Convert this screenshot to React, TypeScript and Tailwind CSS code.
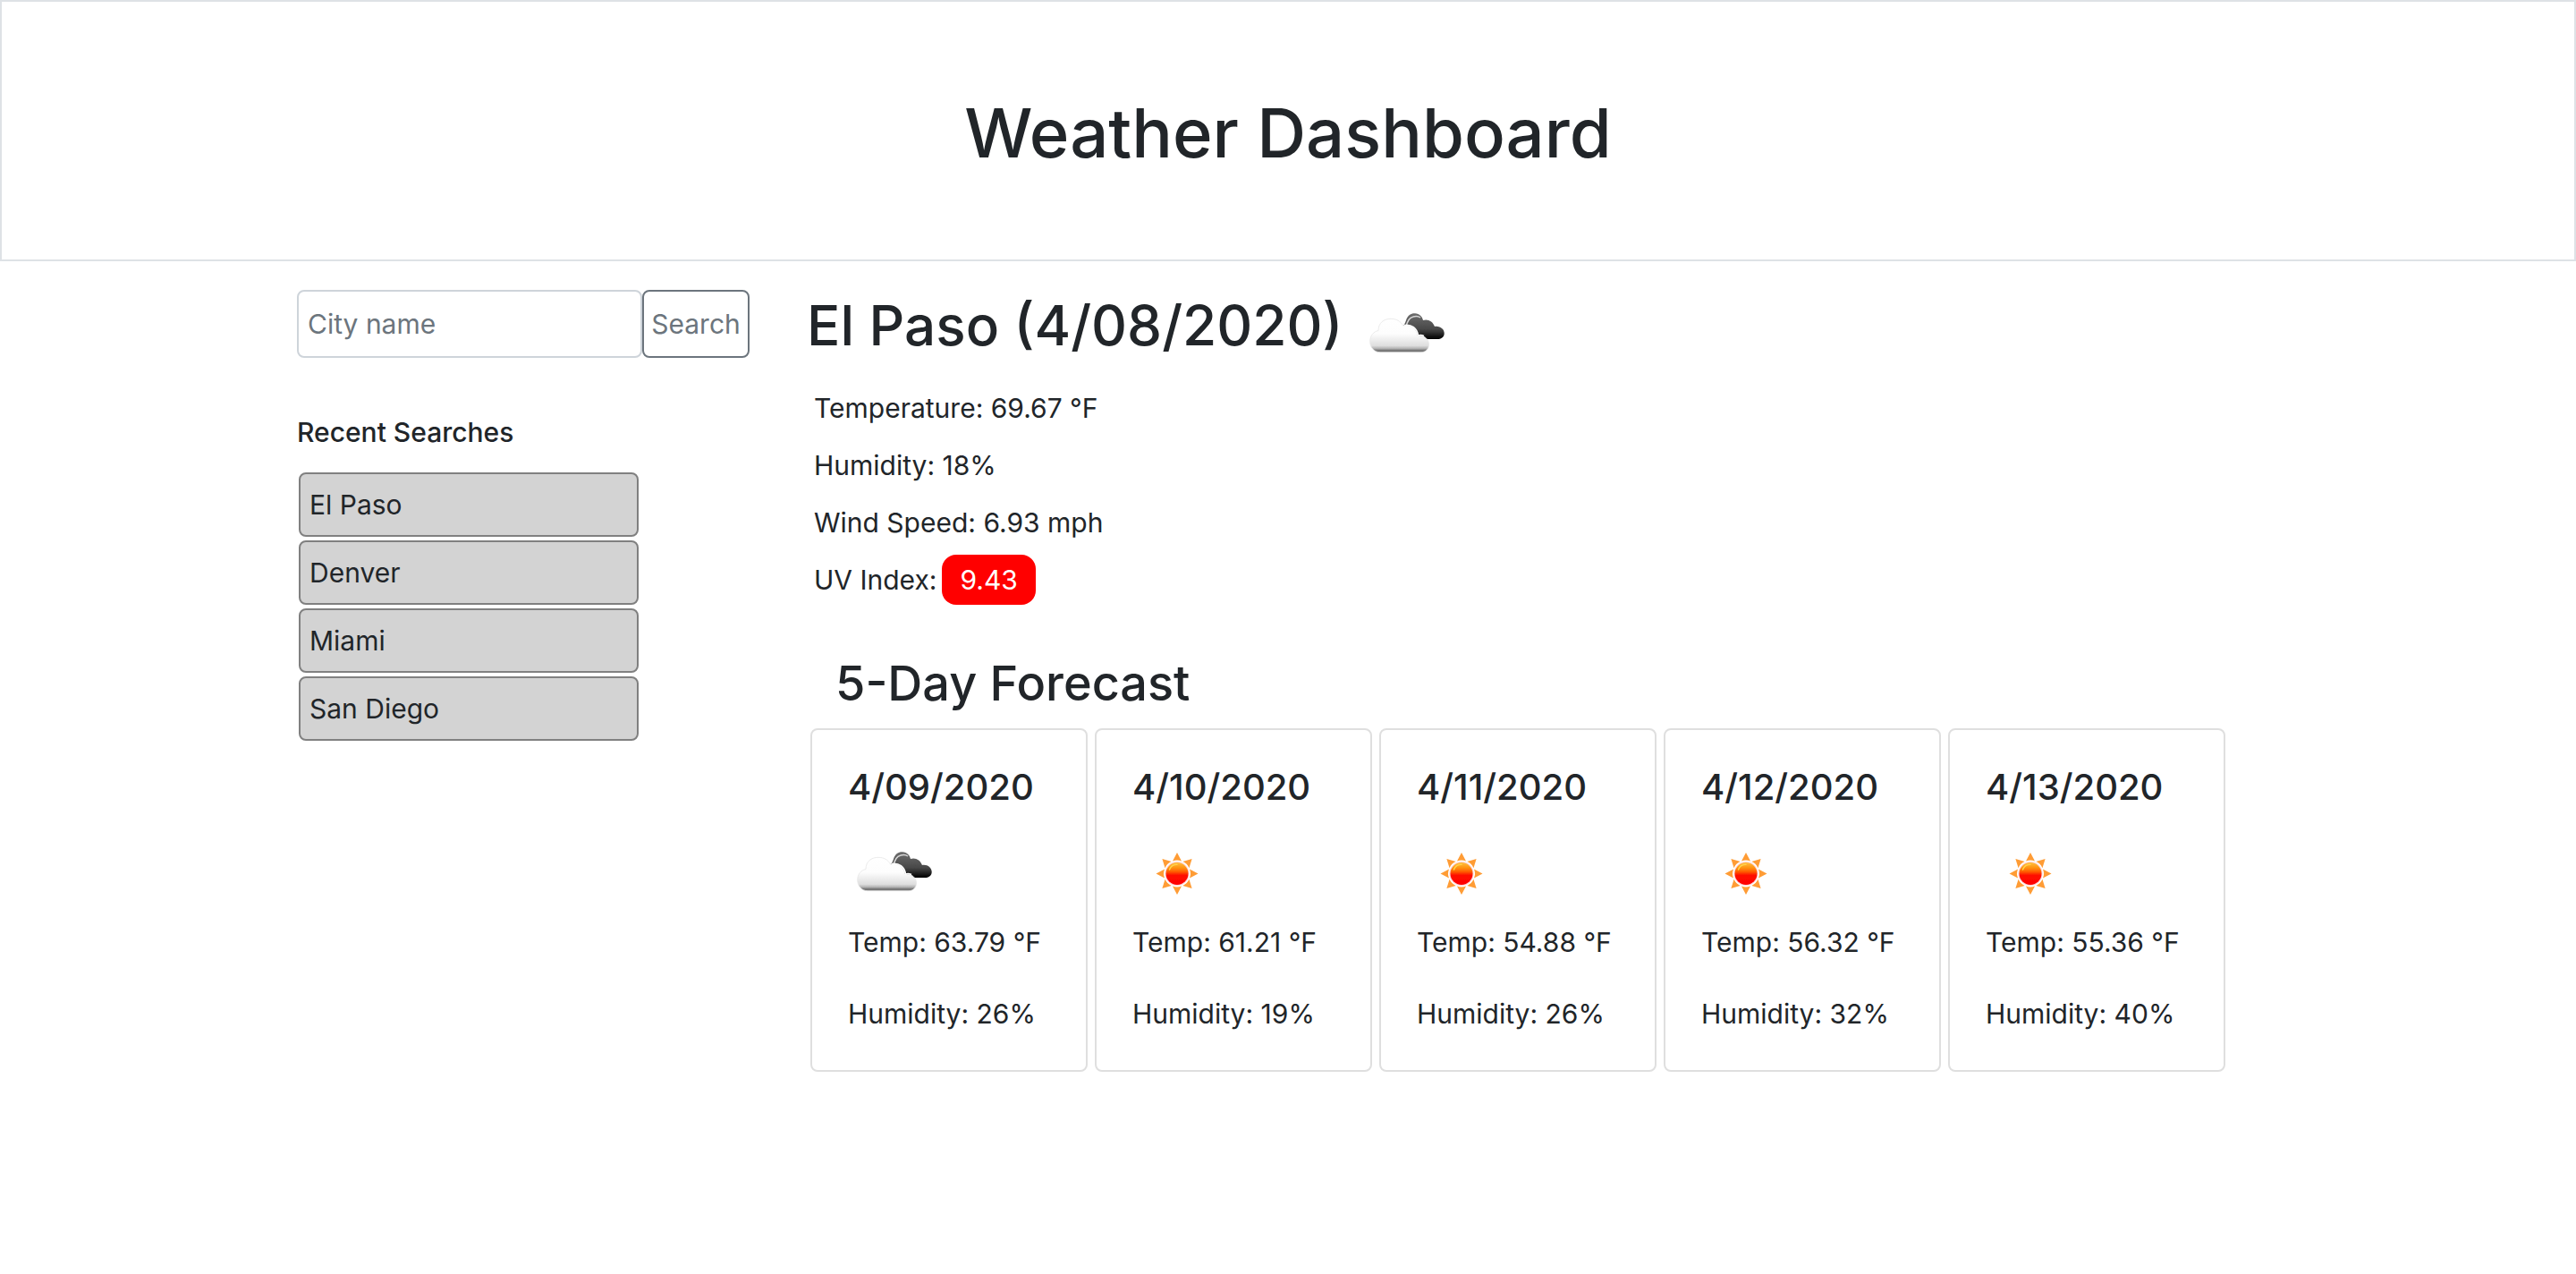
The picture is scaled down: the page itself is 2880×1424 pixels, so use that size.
type Sky = "clouds" | "sun";

interface Day {
  date: string;
  sky: Sky;
  temp: string;
  humidity: string;
}

const recent = ["El Paso", "Denver", "Miami", "San Diego"];

const forecast: Day[] = [
  { date: "4/09/2020", sky: "clouds", temp: "63.79", humidity: "26" },
  { date: "4/10/2020", sky: "sun", temp: "61.21", humidity: "19" },
  { date: "4/11/2020", sky: "sun", temp: "54.88", humidity: "26" },
  { date: "4/12/2020", sky: "sun", temp: "56.32", humidity: "32" },
  { date: "4/13/2020", sky: "sun", temp: "55.36", humidity: "40" },
];

const rays = [0, 45, 90, 135, 180, 225, 270, 315];

function Clouds() {
  return (
    <svg viewBox="0 -1 100 100" className="size-[100px] shrink-0" role="img" aria-label="Broken clouds">
      <defs>
        <linearGradient id="darkCloud" x1="0" y1="26" x2="0" y2="54" gradientUnits="userSpaceOnUse">
          <stop offset="0" stopColor="#6c6c6c" />
          <stop offset="0.6" stopColor="#484848" />
          <stop offset="0.85" stopColor="#1c1c1c" />
          <stop offset="1" stopColor="#000" />
        </linearGradient>
        <linearGradient id="lightCloud" x1="0" y1="31" x2="0" y2="69" gradientUnits="userSpaceOnUse">
          <stop offset="0" stopColor="#fff" />
          <stop offset="0.45" stopColor="#fdfdfd" />
          <stop offset="0.8" stopColor="#dedede" />
          <stop offset="0.88" stopColor="#b4b4b4" />
          <stop offset="0.94" stopColor="#757575" />
          <stop offset="1" stopColor="#757575" />
        </linearGradient>
        <filter id="soften" x="-10%" y="-10%" width="120%" height="120%">
          <feGaussianBlur stdDeviation="0.6" />
        </filter>
      </defs>
      <g filter="url(#soften)">
        <path
          d="M46 40 C49 39 50 36 51 33 C53 27 57 25 61 25.300 C66 25.500 69 29 70 33 C75 31 81 34 83 40 C89 39 94 43 93.700 48 C93.400 52 90 54 86 54 L64 54 L56 44 Z"
          fill="url(#darkCloud)"
        />
        <path d="M51 41 C52 34 55 30 59 29 C62 28 65 28.500 67 30" fill="none" stroke="#d8d8d8" strokeWidth="1.500" />
        <path
          d="M22 68.700 C15 68.700 10.700 63 10.700 56.500 C10.700 50 15 45.500 20 44.500 C20 36 26 31.300 34 31.300 C40 31.300 45 34 47.500 39 C56 37 63 42 64 50.500 C71 49 76.500 54 76.500 60 C76.500 65 73 68.700 68 68.700 Z"
          fill="url(#lightCloud)"
          stroke="#e6e6e6"
          strokeWidth="0.800"
        />
        <path d="M49 38.500 C57 37 63.500 42 64.500 50 C67 49 69 49.500 71 50.500" fill="none" stroke="#fff" strokeWidth="1.500" />
      </g>
    </svg>
  );
}

function Sun() {
  return (
    <svg viewBox="0 0 100 100" className="size-[100px] shrink-0" role="img" aria-label="Clear sky">
      <defs>
        <linearGradient id="sunDisc" x1="0" y1="0" x2="0" y2="1">
          <stop offset="0" stopColor="#ffc040" />
          <stop offset="0.25" stopColor="#ff9010" />
          <stop offset="0.42" stopColor="#ff5a00" />
          <stop offset="0.58" stopColor="#ff0c00" />
          <stop offset="1" stopColor="#ff0000" />
        </linearGradient>
        <filter id="sunSoften" x="-10%" y="-10%" width="120%" height="120%">
          <feGaussianBlur stdDeviation="0.7" />
        </filter>
      </defs>
      <g filter="url(#sunSoften)">
        {rays.map((angle) => (
          <path
            key={angle}
            d="M50 27 L55 36.500 Q50 34.500 45 36.500 Z"
            fill="#ff9c35"
            transform={`rotate(${angle} 50 50.500)`}
          />
        ))}
        <circle cx="50" cy="50.500" r="13.500" fill="#ffd3d3" />
        <circle cx="50" cy="50.500" r="12.500" fill="url(#sunDisc)" />
        <path d="M41.500 46 C43 42 46 40.300 50 40.300" fill="none" stroke="#ffd34a" strokeWidth="1.500" strokeLinecap="round" />
      </g>
    </svg>
  );
}

function DayCard({ date, sky, temp, humidity }: Day) {
  return (
    <article className="rounded-lg border-2 border-[#dfdfdf] p-10">
      <h4 className="mb-[22px] text-[40px] leading-[48px] font-medium">{date}</h4>
      {sky === "sun" ? <Sun /> : <Clouds />}
      <p className="mt-1 leading-[46px] whitespace-nowrap">Temp: {temp} °F</p>
      <p className="mt-[34px] leading-[46px] whitespace-nowrap">Humidity: {humidity}%</p>
    </article>
  );
}

export default function App() {
  return (
    <div className="min-h-screen bg-white font-[Inter,sans-serif] text-[30px] text-[#212529]">
      <header className="border-2 border-[#dee2e6] pt-[98px] pb-[94px] text-center">
        <h1 className="text-[76px] leading-[96px] font-medium">Weather Dashboard</h1>
      </header>

      <div className="mx-auto flex max-w-[2280px] gap-16 px-8 pt-8">
        <aside className="w-[506px] shrink-0">
          <form className="flex" onSubmit={(e) => e.preventDefault()}>
            <input
              type="text"
              aria-label="City name"
              placeholder="City name"
              className="h-[76px] min-w-0 flex-1 rounded-lg border-2 border-[#ced4da] px-2.5 placeholder:text-[#6c757d] placeholder:opacity-100"
            />
            <button type="submit" className="h-[76px] w-[120px] rounded-lg border-2 border-[#6c757d] text-center text-[#6c757d]">
              Search
            </button>
          </form>
          <h2 className="mt-[59px] leading-[48px] font-medium">Recent Searches</h2>
          <ul className="mt-[21px] ml-0.5 flex w-[380px] flex-col gap-1">
            {recent.map((city) => (
              <li key={city}>
                <button type="button" className="block h-[72px] w-full rounded-lg border-2 border-[#808080] bg-[#d3d3d3] px-2.5 text-left">
                  {city}
                </button>
              </li>
            ))}
          </ul>
        </aside>

        <main className="min-w-0 flex-1">
          <div className="flex items-start gap-5">
            <h2 className="text-[62px] leading-[80px] font-medium whitespace-nowrap">El Paso (4/08/2020)</h2>
            <Clouds />
          </div>
          <div className="pl-2 leading-[64px]">
            <p>Temperature: 69.67 °F</p>
            <p>Humidity: 18%</p>
            <p>Wind Speed: 6.93 mph</p>
            <p className="flex items-center gap-1.5">
              UV Index:
              <span className="rounded-2xl bg-[#ff0000] px-5 leading-[56px] text-white">9.43</span>
            </p>
          </div>
          <h3 className="mt-[50px] mb-4 pl-8 text-[54px] leading-[68px] font-medium">5-Day Forecast</h3>
          <div className="ml-1 grid max-w-[1582px] grid-cols-5 gap-2">
            {forecast.map((day) => (
              <DayCard key={day.date} {...day} />
            ))}
          </div>
        </main>
      </div>
    </div>
  );
}
